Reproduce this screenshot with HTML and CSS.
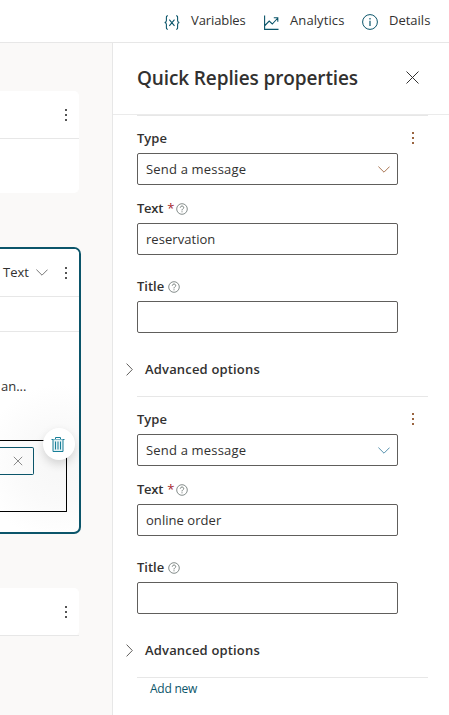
FILE: index.html
```html
<!DOCTYPE html>
<html lang="en">
<head>
<meta charset="utf-8">
<title>Quick Replies properties</title>
<link rel="stylesheet" href="styles.css">
</head>
<body>
<svg class="defs" width="0" height="0">
  <symbol id="dots" viewBox="0 0 4 14"><path d="M1 1h2v2H1zM1 6h2v2H1zM1 11h2v2H1z" fill="currentColor"/></symbol>
  <symbol id="down" viewBox="0 0 12 7"><path d="M.4.6 6 6.200 11.600.6" fill="none" stroke="currentColor"/></symbol>
  <symbol id="right" viewBox="0 0 7 13"><path d="M.6.6 6.300 6.500.6 12.400" fill="none" stroke="currentColor"/></symbol>
  <symbol id="close" viewBox="0 0 13 13"><path d="m.5.5 12 12m0-12-12 12" fill="none" stroke="currentColor"/></symbol>
  <symbol id="help" viewBox="0 0 12 12"><circle cx="6" cy="6" r="5.300" fill="none" stroke="currentColor" stroke-width=".8"/><path d="M4.300 4.700c0-2.200 3.400-2.200 3.400-.1C7.700 5.900 6 5.800 6 7.400M6 8.300v1" fill="none" stroke="currentColor" stroke-width=".9"/></symbol>
</svg>

<header class="topbar">
  <a class="nav variables"><svg width="16" height="15" viewBox="0 0 16 15" fill="none" stroke="currentColor" stroke-width="1.100"><path d="M4 .8C2.300.8 2.400 1.600 2.400 3v2.500c0 1.200-.5 1.800-1.700 2 1.200.2 1.700.8 1.700 2V12c0 1.400-.1 2.200 1.600 2.200M12 .8c1.700 0 1.600.8 1.600 2.200v2.500c0 1.200.5 1.800 1.700 2-1.200.2-1.700.8-1.700 2V12c0 1.400.1 2.200-1.600 2.200M5.300 4.700l5.200 6.100m0-6.100-5.200 6.100"/></svg><span>Variables</span></a>
  <a class="nav analytics"><svg width="15" height="15" viewBox="0 0 15 15" fill="none" stroke="currentColor" stroke-width="1.100"><path d="M.6.500v13.900H14.500M.9 10.500 5.200 6l3.100 3 5.500-6M9.800 2.700h4v4"/></svg><span>Analytics</span></a>
  <a class="nav details"><svg width="16" height="16" viewBox="0 0 16 16" fill="none" stroke="currentColor"><circle cx="8" cy="8" r="7.400"/><path d="M8 6.700V12M8 4v1.400" stroke-width="1.200"/></svg><span>Details</span></a>
</header>

<div class="workspace">
  <main class="canvas">
    <section class="node first">
      <div class="node-head"><svg class="dots"><use href="#dots"/></svg></div>
    </section>
    <section class="node selected">
      <div class="node-head"><span class="kind">Text</span><svg class="down"><use href="#down"/></svg><svg class="dots"><use href="#dots"/></svg></div>
      <div class="toolbar"></div>
      <p class="message">an...</p>
      <div class="replies">
        <div class="chip"><svg class="chip-close" viewBox="0 0 10 10"><path d="m.8.8 8.400 8.400m0-8.400L.8 9.200" fill="none" stroke="currentColor"/></svg></div>
        <button class="trash" aria-label="Delete"><svg width="14" height="17" viewBox="0 0 14 17" fill="none" stroke="currentColor"><path d="M.5 3.500h13M4.500 3.500v-2h5v2"/><path d="M2 3.500v12h10v-12" fill="#e3f1f4"/><path d="M4.500 5.500v8M7 5.500v8M9.500 5.500v8"/></svg></button>
      </div>
    </section>
    <section class="node last">
      <div class="node-head"><svg class="dots"><use href="#dots"/></svg></div>
    </section>
  </main>

  <aside class="panel">
    <div class="panel-head"><h1>Quick Replies properties</h1><svg class="close"><use href="#close"/></svg></div>
    <div class="panel-body">
      <section class="group">
        <div class="type-row"><label class="type">Type</label><svg class="dots"><use href="#dots"/></svg></div>
        <div class="field"><span class="send">Send a message</span><svg class="down warm"><use href="#down"/></svg></div>
        <div class="label text-label"><label>Text</label><b class="required">*</b><svg class="help"><use href="#help"/></svg></div>
        <div class="field"><span class="value">reservation</span></div>
        <div class="label title-label"><label>Title</label><svg class="help"><use href="#help"/></svg></div>
        <div class="field"></div>
        <div class="advanced"><svg class="right"><use href="#right"/></svg><span>Advanced options</span></div>
      </section>
      <section class="group">
        <div class="type-row"><label class="type">Type</label><svg class="dots"><use href="#dots"/></svg></div>
        <div class="field"><span class="send">Send a message</span><svg class="down cool"><use href="#down"/></svg></div>
        <div class="label text-label"><label>Text</label><b class="required">*</b><svg class="help"><use href="#help"/></svg></div>
        <div class="field"><span class="value">online order</span></div>
        <div class="label title-label"><label>Title</label><svg class="help"><use href="#help"/></svg></div>
        <div class="field"></div>
        <div class="advanced"><svg class="right"><use href="#right"/></svg><span>Advanced options</span></div>
      </section>
      <div class="add"><a>Add new</a></div>
    </div>
  </aside>
</div>
</body>
</html>
```
FILE: styles.css
```css
* { box-sizing: border-box; }
body {
  margin: 0;
  width: 449px;
  height: 715px;
  overflow: hidden;
  background: #fff;
  color: #323130;
  font: 13px/20px "Open Sans", "Noto Sans", sans-serif;
}
svg { display: block; flex: none; }
.defs { display: none; }

.topbar {
  display: flex;
  align-items: center;
  justify-content: flex-end;
  gap: 18px;
  height: 43px;
  padding-right: 19px;
  border-bottom: 1px solid #e7e7e7;
}
.nav { display: flex; align-items: center; gap: 11px; height: 20px; }
.nav svg { color: #0b556a; margin-top: 2px; }
.nav span { white-space: nowrap; margin-top: -2px; }
.variables span { width: 55px; letter-spacing: -.1px; }
.analytics span { width: 54px; letter-spacing: .1px; }
.details span { width: 41px; }

.workspace { display: flex; height: 672px; }
.canvas { width: 113px; padding-top: 48px; background: #faf9f8; border-right: 1px solid #e7e7e7; }
.node { background: #fff; border-radius: 0 5px 5px 0; width: 79px; }
.node-head { display: flex; align-items: center; justify-content: flex-end; height: 48px; padding-right: 11px; border-bottom: 1px solid #e7e7e7; }
.dots { width: 4px; height: 14px; color: #555; }
.first { height: 102px; }
.selected { width: 81px; height: 287px; margin-top: 54px; border: solid #0b556a; border-width: 2px 2px 2px 0; border-radius: 0 7px 7px 0; background: radial-gradient(circle at 59px 214px, #f7f7f7 0, #fafafa 40px, #fff 78px); }
.selected .node-head { background: #fff; border-top-right-radius: 5px; }
.kind { width: 25px; margin: -2px 8px 0 0; }
.selected .down { margin-right: 16px; color: #777; }
.down { width: 12px; height: 7px; }
.toolbar { height: 35px; background: #fff; border-bottom: 1px solid #e7e7e7; }
.message { margin: 44px 0 0 1px; height: 20px; }
.replies { position: relative; width: 67px; height: 72px; margin-top: 44px; padding-top: 6px; border: solid #000; border-width: 1px 1px 1px 0; border-radius: 0 1px 1px 0; }
.chip { display: flex; align-items: center; justify-content: flex-end; width: 34px; height: 28px; padding-right: 10px; border: solid #0b556a; border-width: 1px 1px 1px 0; border-radius: 0 2px 2px 0; }
.chip-close { width: 10px; height: 10px; color: #8a8a8a; }
.trash { position: absolute; left: 43px; top: -13px; display: flex; align-items: center; justify-content: center; width: 32px; height: 32px; padding: 0 2px 0 0; border: 0; border-radius: 50%; background: #fff; color: #187f98; box-shadow: 0 4px 10px rgba(0,0,0,.15); }
.last { height: 48px; margin-top: 54px; }

.panel { width: 336px; }
.panel-head { display: flex; align-items: center; justify-content: space-between; height: 72px; padding: 0 30px 0 24px; border-bottom: 1px solid #ebebeb; }
h1 { margin: -2px 0 0; font-size: 19px; line-height: 26px; font-weight: 600; white-space: nowrap; letter-spacing: -.12px; }
.close { width: 13px; height: 13px; margin-top: -3px; }
.panel-body { width: 291px; margin-left: 24px; }
.group { height: 281px; border-top: 1px solid #e7e7e7; }
.type-row { display: flex; align-items: center; justify-content: space-between; height: 37px; padding: 8px 13px 0 0; }
.type-row label { margin-top: -2px; }
.type-row .dots { color: #9a6540; margin-top: -1px; }
label { font-weight: 600; }
.field { display: flex; align-items: center; justify-content: space-between; width: 261px; height: 32px; padding: 0 7px 0 8px; border: 1px solid #605e5c; border-radius: 2px; }
.field span { white-space: nowrap; }
.send { letter-spacing: .18px; }
.value { letter-spacing: .05px; }
.warm { color: #a97553; }
.cool { color: #5590ad; }
.label { display: flex; align-items: center; }
.text-label { height: 38px; padding-bottom: 9px; padding-top: 16px; }
.text-label label { letter-spacing: -.25px; }
.title-label { height: 46px; padding: 17px 0 2px; }
.required { margin-left: 4px; color: #a4262c; font-weight: 400; }
.help { width: 12px; height: 12px; margin: 2px 0 0 4px; color: #66706d; }
.text-label .help { margin-left: 2px; }
.advanced { display: flex; align-items: center; height: 20px; margin: 26px 0 0 -11px; font-weight: 600; }
.advanced span { margin-left: 12px; white-space: nowrap; letter-spacing: .17px; }
.right { width: 7px; height: 13px; color: #605e5c; }
.add { border-top: 1px solid #e7e7e7; padding: 1px 0 0 13px; color: #0b556a; font-size: 12px; letter-spacing: -.25px; }
```
